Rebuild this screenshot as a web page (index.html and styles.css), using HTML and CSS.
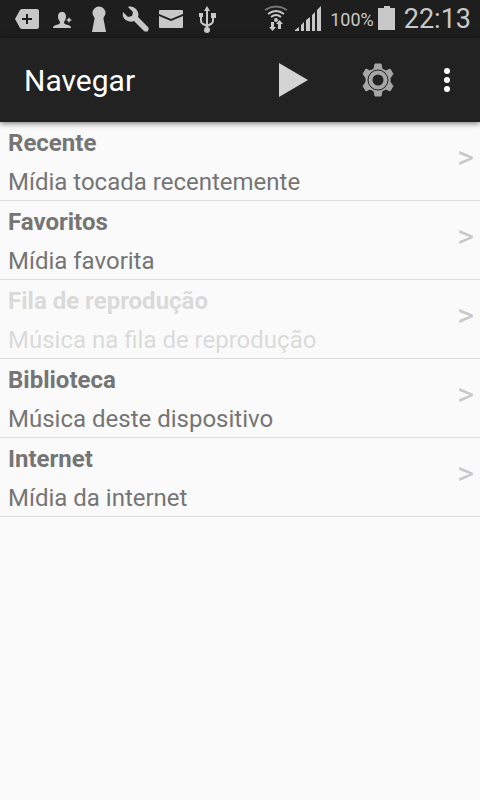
FILE: index.html
```html
<!DOCTYPE html>
<html lang="pt">
<head>
  <meta charset="UTF-8">
  <meta name="viewport" content="width=device-width, initial-scale=1.0">
  <title>Navegar</title>
  <link rel="stylesheet" href="styles.css">
</head>
<body>
  <div class="status-bar">
    <div class="notifications">
      <svg class="status-icon" viewBox="0 0 28 28"><path fill-rule="evenodd" d="M2 14l5-9q1-1 2-1h15q2 0 2 2v16q0 2-2 2H9q-1 0-2-1zM13 9v4H9v2h4v4h2v-4h4v-2h-4V9z"/></svg>
      <svg class="status-icon" viewBox="0 0 28 28"><path d="M13 7c3 0 4 2 4 5 0 2-1 3-2 5 0 2 1 2 4 3 2 1 3 1 3 3H4c0-2 1-2 3-3 3-1 4-1 4-3-1-2-2-3-2-5 0-3 1-5 4-5zM20 12l1 2 2 1-2 1-1 2-1-2-2-1 2-1z"/></svg>
      <svg class="status-icon" viewBox="0 0 28 28"><circle cx="14" cy="8" r="6.5"/><path d="M10 11h8l3 16H7z"/></svg>
      <svg class="status-icon" viewBox="0 0 28 28"><path d="M7 2l5 5-1 4-4 1-5-5c-1 4 1 8 5 9 2 1 4 1 6 0l10 10c3 2 6-1 4-4L17 12c1-3 0-6-2-8-2-2-5-3-8-2z"/></svg>
      <svg class="status-icon" viewBox="0 0 28 28"><path d="M3 5h22q1 0 1 1v3l-12 5L2 9V6q0-1 1-1zM2 11l12 5 12-5v11q0 1-1 1H3q-1 0-1-1z"/></svg>
      <svg class="status-icon" viewBox="0 0 28 28"><path d="M14 1l3 5h-6zM6 8h4v4H6zM18 8h5v5h-5z"/><circle cx="14" cy="25" r="3"/><path class="line" d="M14 5v19M8 11v5q0 2 2 3l4 2M20 12v4q0 2-2 3l-4 2"/></svg>
    </div>
    <div class="system">
      <svg class="status-icon" viewBox="0 0 28 28"><path class="line faint" d="M3 5q11-7 22 0"/><path class="line" d="M6 9q8-6 16 0M9 12q5-4 10 0"/><circle cx="14" cy="15" r="2"/><path d="M9 17h3v5h2l-3.500 4-3.500-4h2zM19 24h-3v-5h-2l3.500-4 3.500 4h-2z"/></svg>
      <svg class="status-icon" viewBox="0 0 28 28"><path d="M1 26v-1l4-3v4zM7 26v-6l3-3v9zM12 26V15l4-3v14zM18 26V10l3-3v19zM23 26V5l4-4v25z"/></svg>
      <span class="percent">100%</span>
      <svg class="battery-icon" viewBox="0 0 18 28"><path d="M6 1h6v2h5v22H0V3h6z"/></svg>
      <span class="clock">22:13</span>
    </div>
  </div>

  <header class="action-bar">
    <h1>Navegar</h1>
    <button class="action" aria-label="Reproduzir">
      <svg class="action-icon" viewBox="0 0 40 40"><path fill="#d4d4d4" d="M5 3v34l29-17z"/></svg>
    </button>
    <button class="action" aria-label="Configurações">
      <svg class="action-icon" viewBox="0 0 40 40">
        <path fill="#a6a6a6" stroke="#a6a6a6" stroke-linejoin="round" d="M17 4h6l1 5 4 2 4-2 3 5-3 4v4l3 4-3 5-4-2-4 2-1 5h-6l-1-5-4-2-4 2-3-5 3-4v-4l-3-4 3-5 4 2 4-2z"/>
        <circle cx="20" cy="20" r="10" fill="none" stroke="#222"/>
        <circle cx="20" cy="20" r="5.5" fill="#222"/>
      </svg>
    </button>
    <button class="action action-more" aria-label="Mais opções">
      <svg class="action-icon" viewBox="0 0 40 40" fill="#fff"><circle cx="20" cy="11" r="3"/><circle cx="20" cy="20" r="3"/><circle cx="20" cy="29" r="3"/></svg>
    </button>
  </header>

  <main class="browse-list">
    <a class="item" href="#recente">
      <span class="item-text"><strong>Recente</strong><span>Mídia tocada recentemente</span></span>
      <span class="chevron">&gt;</span>
    </a>
    <a class="item" href="#favoritos">
      <span class="item-text"><strong>Favoritos</strong><span>Mídia favorita</span></span>
      <span class="chevron">&gt;</span>
    </a>
    <a class="item disabled" href="#fila" aria-disabled="true">
      <span class="item-text"><strong>Fila de reprodução</strong><span>Música na fila de reprodução</span></span>
      <span class="chevron">&gt;</span>
    </a>
    <a class="item" href="#biblioteca">
      <span class="item-text"><strong>Biblioteca</strong><span>Música deste dispositivo</span></span>
      <span class="chevron">&gt;</span>
    </a>
    <a class="item" href="#internet">
      <span class="item-text"><strong>Internet</strong><span>Mídia da internet</span></span>
      <span class="chevron">&gt;</span>
    </a>
  </main>
</body>
</html>
```
FILE: styles.css
```css
* {
  margin: 0;
  padding: 0;
  box-sizing: border-box;
}

body {
  background-color: #fafafa;
  font-family: Roboto, sans-serif;
  font-size: 24px;
  color: #757575;
}

.status-bar {
  display: flex;
  justify-content: space-between;
  align-items: center;
  height: 38px;
  padding: 0 9px 0 13px;
  background-color: #1e1e1e;
  color: #c8c8c8;
}

.notifications {
  display: flex;
  gap: 8px;
}

.system {
  display: flex;
  align-items: center;
  gap: 4px;
}

.status-icon {
  width: 28px;
  height: 28px;
  fill: #c8c8c8;
}

.status-icon .line {
  fill: none;
  stroke: #c8c8c8;
  stroke-width: 2;
}

.status-icon .faint {
  stroke: #777;
}

.battery-icon {
  width: 18px;
  height: 28px;
  fill: #c8c8c8;
}

.percent {
  margin-left: 4px;
  font-size: 18px;
}

.clock {
  margin-left: 4px;
  font-size: 27px;
}

.action-bar {
  position: relative;
  display: flex;
  align-items: center;
  height: 84px;
  padding: 0 6px 0 24px;
  background-color: #222;
  box-shadow: 0 1px 6px rgba(0, 0, 0, 0.6);
}

h1 {
  flex: 1;
  font-size: 30px;
  font-weight: 400;
  color: #fff;
}

.action {
  display: flex;
  justify-content: center;
  align-items: center;
  width: 84px;
  height: 84px;
  border: none;
  background: none;
  cursor: pointer;
}

.action-more {
  width: 54px;
}

.action-icon {
  width: 40px;
  height: 40px;
}

.item {
  display: flex;
  justify-content: space-between;
  padding: 0 6px 0 8px;
  border-bottom: 1px solid #dcdcdc;
  color: #757575;
  text-decoration: none;
}

.item-text {
  display: flex;
  flex-direction: column;
  gap: 4px;
  padding-top: 4px;
  line-height: 35px;
}

.chevron {
  line-height: 70px;
  font-size: 32px;
  color: #c8c8c8;
}

.item.disabled {
  color: #dadada;
}
```
